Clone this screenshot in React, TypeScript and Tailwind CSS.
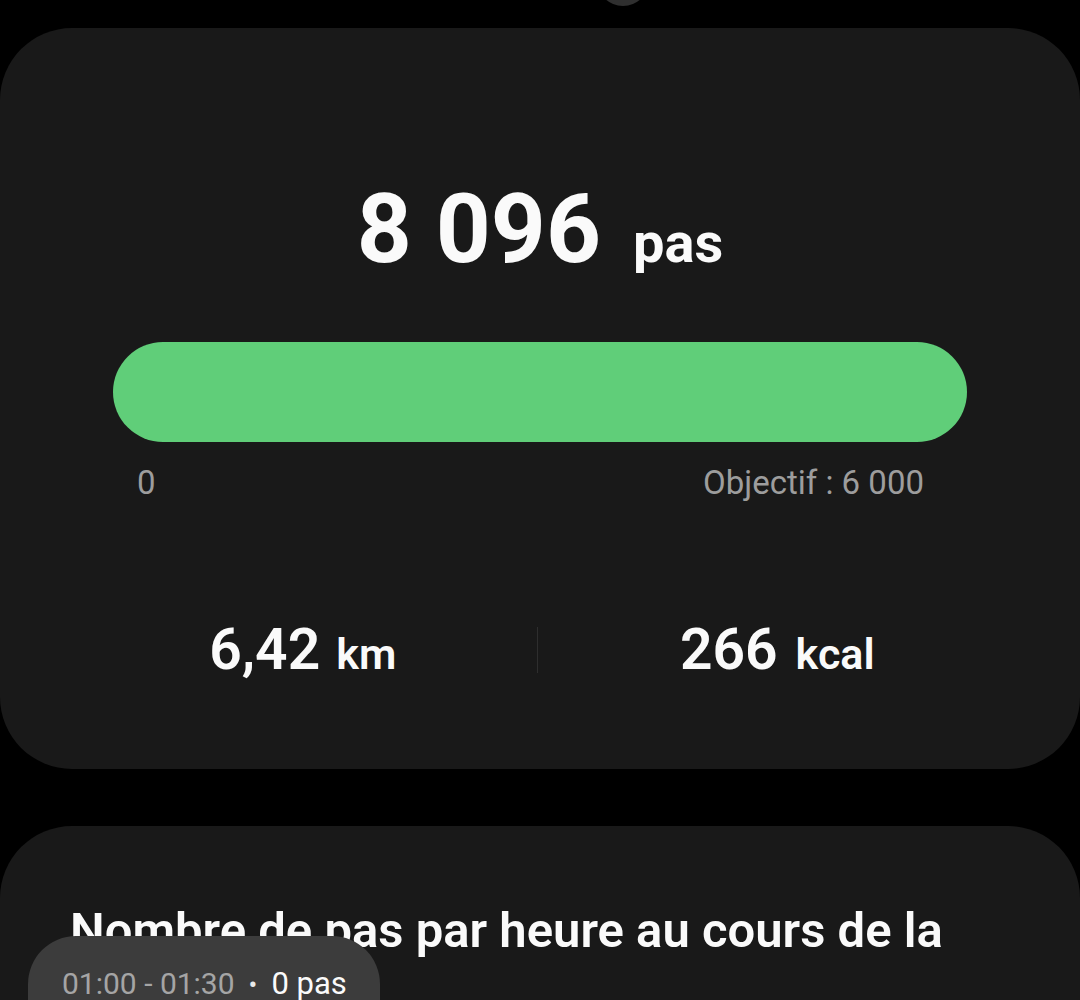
import React from 'react';

const font = { fontFamily: 'Roboto, "Noto Sans", sans-serif' };

function StepsCard() {
  return (
    <div className="bg-[#191919] rounded-[72px] pt-[153px] pb-[91px]">
      {/* Total */}
      <div className="flex items-baseline justify-center leading-none text-[#fafafa]">
        <span className="text-[96px] font-bold leading-none">8 096</span>
        <span className="text-[56px] font-bold leading-none ml-[32px]">pas</span>
      </div>

      {/* Progression */}
      <div className="px-[113px] mt-[65px]">
        <div className="h-[100px] rounded-full bg-[#60ce79]" />
        <div className="flex justify-between pl-[24px] pr-[43px] mt-[24px] text-[33px] leading-none text-[#9d9d9d]">
          <span>0</span>
          <span>Objectif : 6 000</span>
        </div>
      </div>

      {/* Distance / calories */}
      <div className="flex items-center px-[66px] mt-[122px] text-[#fafafa]">
        <div className="flex-1 flex items-baseline justify-center">
          <span className="text-[57px] font-semibold leading-none">6,42</span>
          <span className="text-[43px] font-semibold leading-none ml-[16px]">km</span>
        </div>
        <div className="w-px h-[46px] bg-[#2e2e2e] -translate-x-[3px]" />
        <div className="flex-1 flex items-baseline justify-center">
          <span className="text-[57px] font-semibold leading-none">266</span>
          <span className="text-[43px] font-semibold leading-none ml-[18px]">kcal</span>
        </div>
      </div>
    </div>
  );
}

function HourlyCard() {
  return (
    <div className="relative bg-[#191919] rounded-t-[72px] pt-[80px] px-[70px] h-[260px]">
      <h2 className="text-[49px] font-semibold leading-none text-[#fafafa] whitespace-nowrap">
        Nombre de pas par heure au cours de la
      </h2>

      {/* Tooltip */}
      <div className="absolute left-[28px] top-[110px] w-[352px] h-[140px] rounded-[48px] bg-[#3c3c3c] pl-[34px] pt-[32px]">
        <div className="flex items-baseline text-[30px] leading-none whitespace-nowrap">
          <span className="text-[#a5a5a5]">01:00 - 01:30</span>
          <span className="text-[#e8e8e8] mx-[14px] text-[26px]">•</span>
          <span className="text-[#fafafa] text-[31px]">0 pas</span>
        </div>
      </div>
    </div>
  );
}

export default function App() {
  return (
    <div className="relative min-h-screen bg-black overflow-hidden pt-[28px]" style={font}>
      {/* handle */}
      <div className="absolute left-[597px] top-[-46px] w-[52px] h-[52px] rounded-full bg-[#2f2f2f]" />

      <StepsCard />
      <div className="mt-[57px]">
        <HourlyCard />
      </div>
    </div>
  );
}
